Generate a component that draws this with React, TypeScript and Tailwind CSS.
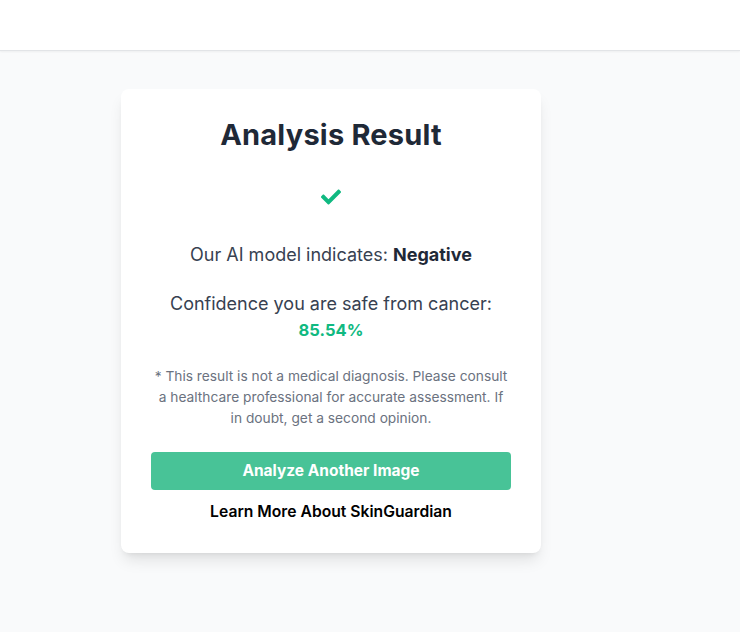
import React from "react";
import { FaCheck } from "react-icons/fa";

export default function App() {
  return (
    <div className="min-h-[632px] bg-[#f9fafb] font-['Inter','Noto_Sans',sans-serif]">
      <header className="h-[51px] bg-white border-b border-[#e2e4e7] shadow-[0_1px_2px_rgba(0,0,0,0.05)]" />
      <main className="pt-[38px] pl-[121px]">
        <div className="w-[420px] bg-white rounded-lg shadow-[0_10px_15px_-3px_rgba(0,0,0,0.1),0_4px_6px_-4px_rgba(0,0,0,0.1)] px-[30px] pt-[28px] pb-[30px] flex flex-col items-center text-center">
          <h1 className="text-[29px] leading-[36px] font-bold text-[#1f2937] tracking-[0.2px]">Analysis Result</h1>
          <div className="mt-[24px] h-[40px] flex items-center justify-center">
            <FaCheck className="text-[#10b981] w-[20px] h-[20px]" />
          </div>
          <p className="mt-[25px] text-[18px] leading-[26px] text-[#374151]">
            Our AI model indicates: <span className="font-bold text-[#1f2937]">Negative</span>
          </p>
          <p className="mt-[23px] text-[18px] leading-[26px] text-[#374151]">
            Confidence you are safe from cancer:
            <br />
            <span className="font-bold text-[#10b981] text-[16.5px]">85.54%</span>
          </p>
          <p className="mt-[23px] text-[13.75px] leading-[21px] text-[#6b7280] whitespace-nowrap">
            * This result is not a medical diagnosis. Please consult
            <br />
            a healthcare professional for accurate assessment. If
            <br />
            in doubt, get a second opinion.
          </p>
          <button className="mt-[23px] w-full h-[38px] rounded bg-[#48c397] text-white font-bold text-[15.5px]">
            Analyze Another Image
          </button>
          <a className="mt-[11px] text-[15.7px] leading-[22px] font-semibold text-black">Learn More About SkinGuardian</a>
        </div>
      </main>
    </div>
  );
}
